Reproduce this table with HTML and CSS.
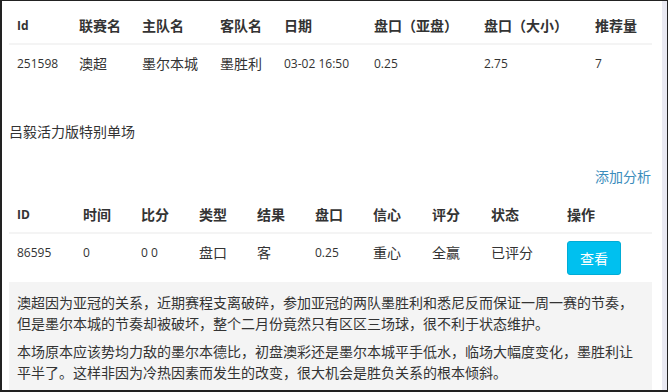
FILE: index.html
```html
<!DOCTYPE html>
<html lang="zh-CN">
<head>
<meta charset="utf-8">
<title>单场分析</title>
<link rel="stylesheet" href="styles.css">
</head>
<body>
<div class="frame">
  <div class="main">
    <table class="tbl t1">
      <colgroup>
        <col class="c1"><col class="c2"><col class="c3"><col class="c4"><col class="c5"><col class="c6"><col class="c7"><col class="c8">
      </colgroup>
      <thead>
        <tr><th class="num">Id</th><th>联赛名</th><th>主队名</th><th>客队名</th><th>日期</th><th>盘口（亚盘）</th><th>盘口（大小）</th><th>推荐量</th></tr>
      </thead>
      <tbody>
        <tr><td class="num">251598</td><td>澳超</td><td>墨尔本城</td><td>墨胜利</td><td class="num">03-02 16:50</td><td class="num">0.25</td><td class="num">2.75</td><td class="num">7</td></tr>
      </tbody>
    </table>

    <div class="title">吕毅活力版特别单场</div>

    <div class="actions"><a class="link" href="#">添加分析</a></div>

    <table class="tbl t2">
      <colgroup>
        <col class="d1"><col class="d2"><col class="d3"><col class="d4"><col class="d5"><col class="d6"><col class="d7"><col class="d8"><col class="d9"><col class="d10">
      </colgroup>
      <thead>
        <tr><th class="num">ID</th><th>时间</th><th>比分</th><th>类型</th><th>结果</th><th>盘口</th><th>信心</th><th>评分</th><th>状态</th><th>操作</th></tr>
      </thead>
      <tbody>
        <tr><td class="num">86595</td><td class="num">0</td><td class="num">0 0</td><td>盘口</td><td>客</td><td class="num">0.25</td><td>重心</td><td>全赢</td><td>已评分</td><td class="act"><button class="btn">查看</button></td></tr>
      </tbody>
    </table>

    <div class="well">
      <p>澳超因为亚冠的关系，近期赛程支离破碎，参加亚冠的两队墨胜利和悉尼反而保证一周一赛的节奏，但是墨尔本城的节奏却被破坏，整个二月份竟然只有区区三场球，很不利于状态维护。</p>
      <p>本场原本应该势均力敌的墨尔本德比，初盘澳彩还是墨尔本城平手低水，临场大幅度变化，墨胜利让平半了。这样非因为冷热因素而发生的改变，很大机会是胜负关系的根本倾斜。</p>
    </div>
  </div>
  <div class="bar"></div>
</div>
</body>
</html>
```

FILE: styles.css
```css
* { box-sizing: border-box; }
html, body { margin: 0; padding: 0; background: #fff; }
body {
  font-family: "Noto Sans CJK SC", "Open Sans", sans-serif;
  font-size: 14px;
  line-height: 20px;
  color: #333;
}
.frame {
  width: 668px;
  height: 392px;
  display: flex;
  border-left: 2px solid #222;
  border-top: 1px solid #222;
  border-bottom: 2px solid #222;
  border-right: 1px solid #222;
  overflow: hidden;
}
.main {
  flex: 1;
  padding: 6px 10px 0 7px;
  overflow: hidden;
}
.bar {
  width: 5px;
  background: #e9e9f2;
}
.tbl {
  width: 100%;
  border-collapse: collapse;
  table-layout: fixed;
}
.tbl th, .tbl td {
  padding: 8px;
  text-align: left;
  vertical-align: top;
  line-height: 20px;
  white-space: nowrap;
}
.tbl th {
  font-weight: bold;
  border-bottom: 2px solid #f4f4f4;
}
.num {
  font-family: "Open Sans", "Noto Sans CJK SC", sans-serif;
  font-size: 12px;
}
.tbl .num {
  padding-top: 9px;
  line-height: 19px;
}
.t1 { margin-bottom: 40px; }
.t1 .c1 { width: 62px; }
.t1 .c2 { width: 63px; }
.t1 .c3 { width: 78px; }
.t1 .c4 { width: 64px; }
.t1 .c5 { width: 90px; }
.t1 .c6 { width: 110px; }
.t1 .c7 { width: 111px; }
.t1 .c8 { width: 65px; }
.t2 .d1 { width: 66px; }
.t2 .d2 { width: 58px; }
.t2 .d3 { width: 58px; }
.t2 .d4 { width: 58px; }
.t2 .d5 { width: 58px; }
.t2 .d6 { width: 58px; }
.t2 .d7 { width: 59px; }
.t2 .d8 { width: 59px; }
.t2 .d9 { width: 76px; }
.t2 .d10 { width: 93px; }
.t2 td { padding-bottom: 7px; }
.title {
  margin-top: 1px;
  line-height: 20px;
}
.actions {
  margin-top: 25px;
  margin-bottom: 10px;
  text-align: right;
  padding-right: 1px;
}
.link {
  color: #3c8dbc;
  text-decoration: none;
}
.btn {
  font-family: "Noto Sans CJK SC", sans-serif;
  font-size: 14px;
  line-height: 20px;
  padding: 6px 12px;
  color: #fff;
  background: #00c0ef;
  border: 1px solid #00acd6;
  border-radius: 3px;
  margin-top: -1px;
}
.well {
  background: #f4f4f4;
  padding: 10px 8px 10px 8px;
  line-height: 21px;
}
.well p {
  margin: 0 0 7px 0;
}
```
